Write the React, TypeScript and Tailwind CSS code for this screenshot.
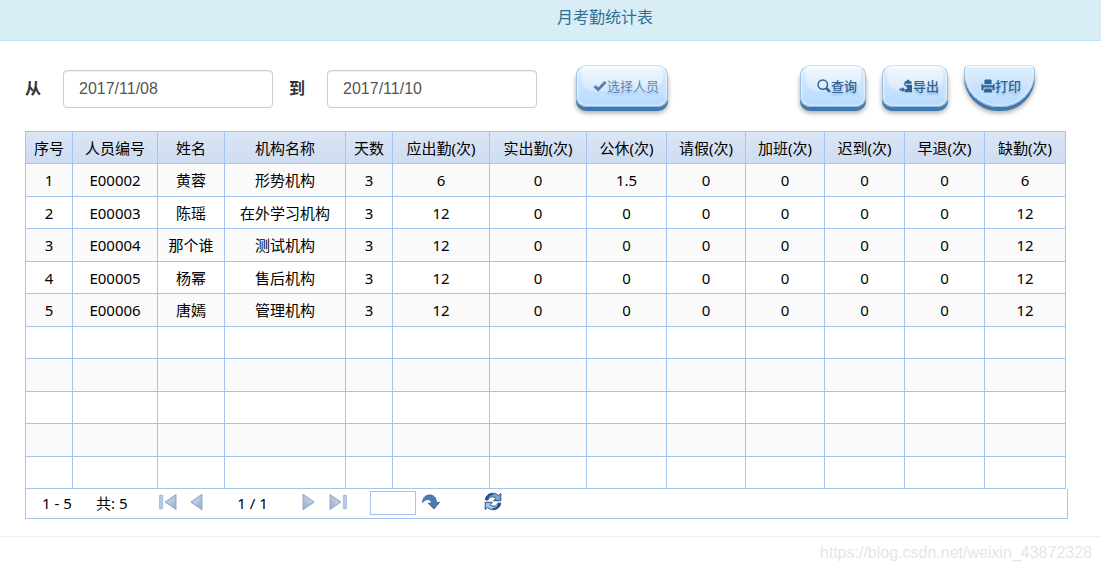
import { useState } from "react";
import type { ReactNode } from "react";

const columns = [
  { title: "序号", width: "w-[47px]" },
  { title: "人员编号", width: "w-[85px]" },
  { title: "姓名", width: "w-[67px]" },
  { title: "机构名称", width: "w-[121px]" },
  { title: "天数", width: "w-[47px]" },
  { title: "应出勤(次)", width: "w-[97px]" },
  { title: "实出勤(次)", width: "w-[97px]" },
  { title: "公休(次)", width: "w-[80px]" },
  { title: "请假(次)", width: "w-[79px]" },
  { title: "加班(次)", width: "w-[79px]" },
  { title: "迟到(次)", width: "w-[80px]" },
  { title: "早退(次)", width: "w-[80px]" },
  { title: "缺勤(次)", width: "w-[81px]" },
];

const records: string[][] = [
  ["1", "E00002", "黄蓉", "形势机构", "3", "6", "0", "1.5", "0", "0", "0", "0", "6"],
  ["2", "E00003", "陈瑶", "在外学习机构", "3", "12", "0", "0", "0", "0", "0", "0", "12"],
  ["3", "E00004", "那个谁", "测试机构", "3", "12", "0", "0", "0", "0", "0", "0", "12"],
  ["4", "E00005", "杨幂", "售后机构", "3", "12", "0", "0", "0", "0", "0", "0", "12"],
  ["5", "E00006", "唐嫣", "管理机构", "3", "12", "0", "0", "0", "0", "0", "0", "12"],
];

const PAGE_ROWS = 10;
const rows = Array.from({ length: PAGE_ROWS }, (_, i) => records[i] ?? columns.map(() => ""));

function CheckIcon() {
  return (
    <svg viewBox="0 0 14 14" className="h-[14px] w-[14px] fill-current opacity-80" aria-hidden="true">
      <path d="M.6 8.2 2.7 6l2.5 2.4L11.5 2l2 1.9-8.3 8.5z" />
    </svg>
  );
}

function SearchIcon() {
  return (
    <svg viewBox="0 0 14 14" className="h-[14px] w-[14px]" fill="none" stroke="currentColor" aria-hidden="true">
      <circle cx="5.8" cy="5.6" r="4.7" strokeWidth="1.5" />
      <path d="m9.2 9 3.8 3.8" strokeWidth="2.5" />
    </svg>
  );
}

function ExportIcon() {
  return (
    <svg viewBox="0 0 14 14" className="h-[14px] w-[14px] fill-current" aria-hidden="true">
      <path d="M8.200.8h1.800l.7 1.400h1.800v2.600H5.600V2.200h1.900z" />
      <path d="M7.600 5.800H13v7.400H5.600v-2L8.800 9z" />
      <path d="M5.200 4.200 10 8.400 9 9.400 4.600 5.200z" />
      <path d="M.5 9.600h2.800V8l3 2.600-3 2.600v-1.600H.5z" />
    </svg>
  );
}

function PrintIcon() {
  return (
    <svg viewBox="0 0 14 14" className="h-[14px] w-[14px] fill-current" aria-hidden="true">
      <path d="M3.400 1.600 4.400.6h5.200l1 1v3.600H3.400z" />
      <path d="M.4 5.600 1.700 4.200v2h10.600v-2l1.300 1.400v5.600h-2.200V8.500H2.600v2.700H.4z" />
      <path d="M3.600 9.600h6.800l1 3.800H2.600z" />
    </svg>
  );
}

function GlossyButton({
  icon,
  children,
  bowl = false,
  light = false,
}: {
  icon: ReactNode;
  children: ReactNode;
  bowl?: boolean;
  light?: boolean;
}) {
  return (
    <button
      type="button"
      className={
        "relative flex h-[42px] items-center border border-x-[#9cc0e2] border-t-[#cfe2f3] border-b-[#8fbbe3] bg-linear-to-b from-[#dceefe] via-[#c9e4fd] to-[#b6dafe] text-[13px] leading-none [text-shadow:0_2px_2px_rgba(70,110,150,0.35)] " +
        (bowl
          ? "rounded-t-[5px] rounded-b-[34px] pr-[13px] pl-[16px] "
          : "rounded-[10px] pr-[8px] pl-[16px] ") +
        (light ? "font-light text-[#31659a] " : "font-medium text-[#2f6396] ") +
        "shadow-[inset_0_1px_3px_#ffffff,inset_0_-1px_2px_#d8edff,0_4px_0_#3f7aae,0_6px_5px_rgba(0,0,0,0.35)]"
      }
    >
      {!bowl && (
        <span className="pointer-events-none absolute inset-x-[4px] top-0 h-[25px] rounded-t-[7px] rounded-b-[14px] bg-linear-to-b from-white/60 to-white/25" />
      )}
      <span className="relative flex items-center">
        {icon}
        {children}
      </span>
    </button>
  );
}

function DateField({ id, label, initial }: { id: string; label: string; initial: string }) {
  const [value, setValue] = useState(initial);
  return (
    <div className="flex items-center gap-[22px]">
      <label htmlFor={id} className="text-[16px] font-bold text-[#333333]">
        {label}
      </label>
      <input
        id={id}
        type="text"
        value={value}
        onChange={(e) => setValue(e.target.value)}
        className="h-[38px] w-[210px] rounded-[4px] border border-[#cccccc] px-[15px] text-[16px] text-[#555555] shadow-[inset_0_1px_1px_rgba(0,0,0,0.075)]"
      />
    </div>
  );
}

function PagerGlyph({ bar = false, flip = false }: { bar?: boolean; flip?: boolean }) {
  return (
    <svg
      viewBox={bar ? "0 0 17 16" : "0 0 12 16"}
      className={(bar ? "h-[18px] w-[18px]" : "h-[18px] w-[13px]") + (flip ? " -scale-x-100" : "")}
      aria-hidden="true"
    >
      <defs>
        <linearGradient id="pagerFill" x1="0" y1="0" x2="1" y2="1">
          <stop offset="0" stopColor="#dbe6f2" />
          <stop offset="1" stopColor="#94abcb" />
        </linearGradient>
      </defs>
      {bar && <rect x="0.5" y="1.5" width="3" height="13" rx="0.5" fill="#b9c9de" stroke="#9fb3d0" strokeWidth="0.7" />}
      <path
        d={bar ? "M16 1v14L6 8z" : "M11 1v14L1 8z"}
        fill="url(#pagerFill)"
        stroke="#94a9c9"
        strokeWidth="1"
        strokeLinejoin="round"
      />
    </svg>
  );
}

function GoIcon() {
  return (
    <svg viewBox="0 0 18 16" className="h-[16px] w-[18px]" aria-hidden="true">
      <path
        d="M.6 8.4C.8 3.6 3.600 1 7.600 1c4.400 0 6.600 2.600 6.800 7.400h3.100L12 15 6.200 9.200h3.200C9.300 6.700 8 5.500 5.800 5.600 3.600 5.700 2 6.600.6 8.400z"
        fill="#4c7ab5"
        stroke="#3b639b"
        strokeWidth="0.9"
        strokeLinejoin="round"
      />
    </svg>
  );
}

function RefreshIcon() {
  return (
    <svg viewBox="0 0 18 18" className="h-[19px] w-[18px]" strokeLinejoin="round" aria-hidden="true">
      <g stroke="#24508c" strokeWidth="1">
        <path d="M1.200 7.200C2 3.200 5 .8 8.800.8c2.300 0 4.200.8 5.500 2.300L16.800 1v7.200H9.600l2.200-2.400C9.400 3.600 5.400 3.700 3.900 7.600z" fill="#7fa3cf" />
        <path d="M16.800 10.800c-.8 4-3.800 6.400-7.600 6.400-2.300 0-4.200-.8-5.500-2.300L1.200 17V9.800h7.200l-2.200 2.400c2.400 2.200 6.400 2.100 7.900-1.800z" fill="#a9c3e2" />
      </g>
      <path d="M1.200 7.200C2 3.200 5 .8 8.800.8l.6 1.800C6.200 2.600 4.600 4.400 3.900 7.600z" fill="#24508c" />
      <path d="M16.800 10.800c-.8 4-3.800 6.400-7.600 6.400l-.6-1.800c3.200 0 4.800-1.200 5.500-4.400z" fill="#24508c" />
    </svg>
  );
}

function Pager() {
  return (
    <div className="mr-[33px] ml-[25px] flex h-[30px] items-center border border-t-0 border-[#a3c4ec] pl-[16px] text-[15px] text-black">
      <span className="w-[54px]">1 - 5</span>
      <span className="w-[63px]">共: 5</span>
      <div className="flex items-center gap-[13px] pb-[4px]">
        <button type="button" aria-label="首页"><PagerGlyph bar /></button>
        <button type="button" aria-label="上一页"><PagerGlyph /></button>
      </div>
      <span className="w-[99px] text-center">1 / 1</span>
      <div className="flex items-center gap-[14px] pb-[4px]">
        <button type="button" aria-label="下一页"><PagerGlyph flip /></button>
        <button type="button" aria-label="末页"><PagerGlyph bar flip /></button>
      </div>
      <input
        type="text"
        aria-label="页码"
        className="mb-[2px] ml-[23px] h-[24px] w-[46px] border border-[#a3c4ec] px-1"
      />
      <button type="button" aria-label="跳转" className="mb-[3px] ml-[6px]"><GoIcon /></button>
      <button type="button" aria-label="刷新" className="mb-[4px] ml-[44px]"><RefreshIcon /></button>
    </div>
  );
}

export default function App() {
  return (
    <div className="min-h-screen bg-white font-['Liberation_Sans','Noto_Sans_CJK_SC',sans-serif]">
      <header className="flex h-[41px] justify-center border-b border-[#bce8f1] bg-[#d9edf7] pt-[6px] pl-[109px]">
        <h1 className="text-[16px] leading-[24px] font-normal text-[#31708f]">月考勤统计表</h1>
      </header>

      <form className="flex items-center pt-[24px] pr-[66px] pl-[25px]" onSubmit={(e) => e.preventDefault()}>
        <div className="flex items-center gap-[16px] pt-[1px]">
          <DateField id="from" label="从" initial="2017/11/08" />
          <DateField id="to" label="到" initial="2017/11/10" />
        </div>
        <div className="ml-[39px] pb-[4px]">
          <GlossyButton icon={<CheckIcon />} light>选择人员</GlossyButton>
        </div>
        <div className="ml-auto flex gap-[16px] pb-[4px]">
          <GlossyButton icon={<SearchIcon />}>查询</GlossyButton>
          <GlossyButton icon={<ExportIcon />}>导出</GlossyButton>
          <GlossyButton icon={<PrintIcon />} bowl>打印</GlossyButton>
        </div>
      </form>

      <main className="border-b border-[#f0f0f0] pt-[20px] pb-[17px] font-['Noto_Sans','Noto_Sans_CJK_SC',sans-serif]">
        <div className="pr-[35px] pl-[25px]">
          <table className="w-full table-fixed border-collapse text-center text-[15px] leading-[20px] text-black">
            <thead>
              <tr className="h-[32px] bg-linear-to-b from-[#dbe6f5] to-[#cddcf0]">
                {columns.map((c) => (
                  <th key={c.title} scope="col" className={"border border-[#a3c4ec] p-0 font-normal " + c.width}>
                    {c.title}
                  </th>
                ))}
              </tr>
            </thead>
            <tbody>
              {rows.map((row, r) => (
                <tr key={r} className="h-[33px] odd:bg-[#fafafa] even:h-[32px]">
                  {row.map((cell, c) => (
                    <td key={c} className="border border-[#a3c4ec] p-0">
                      {cell}
                    </td>
                  ))}
                </tr>
              ))}
            </tbody>
          </table>
        </div>
        <Pager />
      </main>

      <footer className="flex justify-end pt-[4px] pr-[9px]">
        <span className="text-[16px] leading-[24px] text-[#e6e6e6]">https://blog.csdn.net/weixin_43872328</span>
      </footer>
    </div>
  );
}
